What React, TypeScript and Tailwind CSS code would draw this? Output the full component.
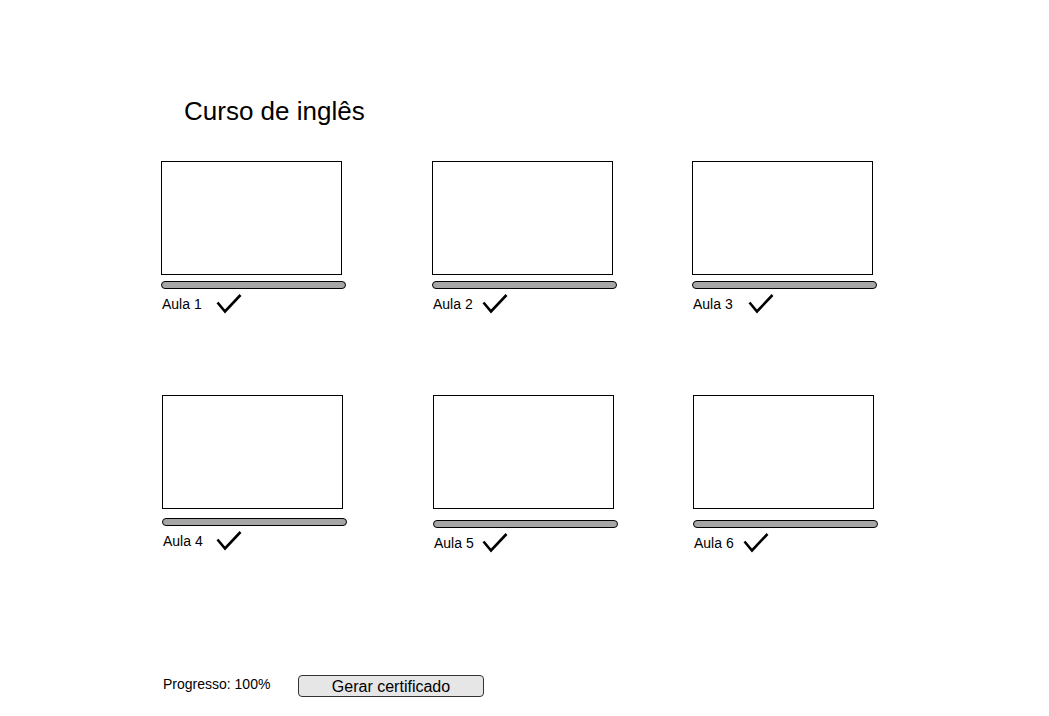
import React from "react";

interface Lesson {
  title: string;
  ml: string;
  barMt: string;
  gap: string;
}

const row1: Lesson[] = [
  { title: "Aula 1", ml: "ml-0", barMt: "mt-[6px]", gap: "gap-[14px]" },
  { title: "Aula 2", ml: "ml-[86px]", barMt: "mt-[6px]", gap: "gap-[9px]" },
  { title: "Aula 3", ml: "ml-[75px]", barMt: "mt-[6px]", gap: "gap-[15px]" },
];

const row2: Lesson[] = [
  { title: "Aula 4", ml: "ml-[1px]", barMt: "mt-[9px]", gap: "gap-[13px]" },
  { title: "Aula 5", ml: "ml-[86px]", barMt: "mt-[11px]", gap: "gap-[8px]" },
  { title: "Aula 6", ml: "ml-[75px]", barMt: "mt-[11px]", gap: "gap-[9px]" },
];

const Check = () => (
  <svg width="26" height="21" viewBox="0 0 26 21" fill="none">
    <path d="M1.5 9.5 L9 18.5 L24.5 2" stroke="#000" strokeWidth="2.6" strokeLinecap="butt" strokeLinejoin="miter" />
  </svg>
);

const LessonCard = ({ lesson }: { lesson: Lesson }) => (
  <div className={`flex flex-col w-[185px] ${lesson.ml}`}>
    {/* video placeholder */}
    <div className="w-[181px] h-[114px] border border-black bg-white" />
    {/* progress bar */}
    <div className={`w-[185px] h-[8px] rounded-full border border-black bg-[#a6a6a6] ${lesson.barMt}`} />
    <div className={`flex items-center h-[21px] mt-[4px] ${lesson.gap}`}>
      <span className="ml-[1px] text-[14px] leading-[16px] text-black">{lesson.title}</span>
      <Check />
    </div>
  </div>
);

export default function App() {
  return (
    <div
      className="w-[1049px] h-[716px] bg-white overflow-hidden pl-[161px] pt-[96px]"
      style={{ fontFamily: '"Liberation Sans", Arial, sans-serif' }}
    >
      <h1 className="ml-[23px] text-[26px] leading-[30px] font-normal text-black">Curso de inglês</h1>

      <div className="flex items-start mt-[35px]">
        {row1.map((l) => (
          <LessonCard key={l.title} lesson={l} />
        ))}
      </div>

      <div className="flex items-start mt-[81px]">
        {row2.map((l) => (
          <LessonCard key={l.title} lesson={l} />
        ))}
      </div>

      <div className="flex items-start mt-[123px]">
        <span className="ml-[2px] w-[135px] text-[14px] leading-[16px] text-black">Progresso: 100%</span>
        <button className="-mt-[1px] w-[186px] h-[22px] rounded-[4px] border border-[#333] bg-[#e6e6e6] text-[16px] leading-[19px] text-black">
          Gerar certificado
        </button>
      </div>
    </div>
  );
}
